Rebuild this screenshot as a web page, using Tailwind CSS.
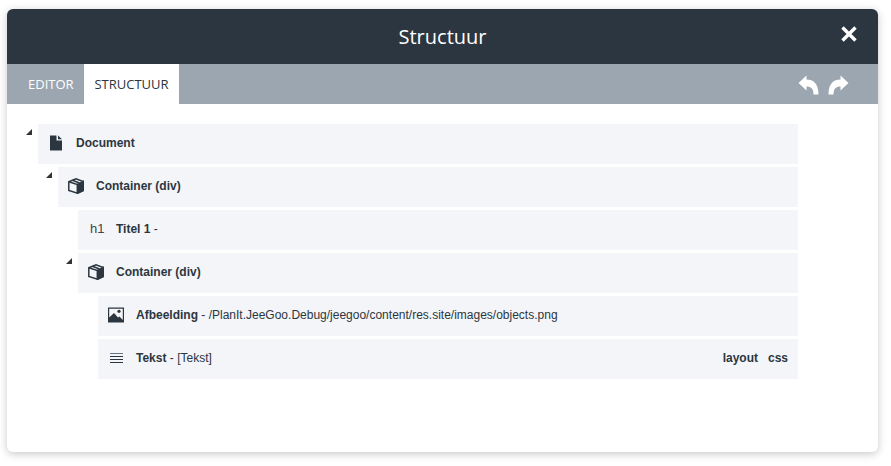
<!DOCTYPE html>
<html lang="en">
<head>
  <meta charset="UTF-8">
  <title>Structuur</title>
  <script src="https://cdn.jsdelivr.net/npm/@tailwindcss/browser@4"></script>
</head>
<body class="bg-white w-[891px] h-[466px] overflow-hidden font-['Liberation_Sans',sans-serif] text-[12px] text-[#2c3640]">
  <div class="mt-[9px] ml-[7px] w-[871px] h-[443px] bg-white rounded-[6px] shadow-[0_2px_8px_rgba(0,0,0,0.22)] overflow-hidden">
    <!-- Header -->
    <div class="relative h-[55px] bg-[#2c3640] flex items-center justify-center text-white font-['Open_Sans',sans-serif] text-[20px]">
      <span>Structuur</span>
      <svg class="absolute left-[834px] top-[17px] w-[16px] h-[16px]" viewBox="0 0 16 16" fill="none" stroke="#fff" stroke-width="3.4"><path d="M1.5 1.500l13 13M14.500 1.500l-13 13"/></svg>
    </div>

    <!-- Toolbar -->
    <div class="h-[40px] bg-[#9ba6b1] flex items-stretch font-['Open_Sans',sans-serif] text-[13px]">
      <div class="w-[77px] pl-[21px] pt-[1px] flex items-center text-white">EDITOR</div>
      <div class="w-[95px] pt-[1px] flex items-center justify-center bg-white text-[#2c3640]">STRUCTUUR</div>
      <div class="ml-auto mr-[29px] flex items-center gap-[9px]">
        <svg class="w-[21px] h-[21px]" viewBox="0 0 21 21" fill="#fff"><path d="M0.500 9L8.500 1.500V5.500C15.500 5.500 20.500 9.500 20.500 20.500H15.500C15.500 14.500 13 12.500 8.500 12.500V16.500Z"/></svg>
        <svg class="w-[21px] h-[21px]" viewBox="0 0 21 21" fill="#fff"><path d="M20.500 9L12.500 1.500V5.500C5.500 5.500 0.500 9.500 0.500 20.500H5.500C5.500 14.500 8 12.500 12.500 12.500V16.500Z"/></svg>
      </div>
    </div>

    <!-- Tree -->
    <div class="pt-[20px] flex flex-col gap-[3px]">
      <div class="relative ml-[31px] w-[760px] h-[40px] bg-[#f3f5f8] flex items-center pl-[10px] pb-[2px] font-bold">
        <svg class="absolute left-[-12px] top-[5px] w-[6px] h-[6px]" viewBox="0 0 6 6" fill="#333"><path d="M6 0V6H0Z"/></svg>
        <svg class="w-[16px] h-[16px] mr-[12px]" viewBox="0 0 16 16" fill="#2c3640"><path d="M2 0.500H8.500V5.500H14V15.500H2ZM10 0.500L14 4.200H10Z"/></svg>
        <span>Document</span>
      </div>

      <div class="relative ml-[51px] w-[740px] h-[40px] bg-[#f3f5f8] flex items-center pl-[10px] pb-[2px] font-bold">
        <svg class="absolute left-[-12px] top-[5px] w-[6px] h-[6px]" viewBox="0 0 6 6" fill="#333"><path d="M6 0V6H0Z"/></svg>
        <svg class="w-[16px] h-[16px] mr-[12px]" viewBox="0 0 16 16" fill="none" stroke="#2c3640" stroke-width="1.500"><path d="M0.800 3.800L8 0.800L15.200 3.500V12.500L9.500 15.200L0.800 12.500Z"/><path d="M0.800 3.800L9.500 6.500V15.200"/><path d="M9.500 6.500L15.200 3.500V12.500L9.500 15.200Z" fill="#2c3640"/><path d="M4.500 2.300L11.500 5"/></svg>
        <span>Container (div)</span>
      </div>

      <div class="ml-[71px] w-[720px] h-[40px] bg-[#f3f5f8] flex items-center pl-[12px] pb-[2px]">
        <span class="w-[26px] text-[13px] text-[#444]">h1</span>
        <span><b>Titel 1</b> -</span>
      </div>

      <div class="relative ml-[71px] w-[720px] h-[40px] bg-[#f3f5f8] flex items-center pl-[10px] pb-[2px] font-bold">
        <svg class="absolute left-[-12px] top-[5px] w-[6px] h-[6px]" viewBox="0 0 6 6" fill="#333"><path d="M6 0V6H0Z"/></svg>
        <svg class="w-[16px] h-[16px] mr-[12px]" viewBox="0 0 16 16" fill="none" stroke="#2c3640" stroke-width="1.500"><path d="M0.800 3.800L8 0.800L15.200 3.500V12.500L9.500 15.200L0.800 12.500Z"/><path d="M0.800 3.800L9.500 6.500V15.200"/><path d="M9.500 6.500L15.200 3.500V12.500L9.500 15.200Z" fill="#2c3640"/><path d="M4.500 2.300L11.500 5"/></svg>
        <span>Container (div)</span>
      </div>

      <div class="ml-[91px] w-[700px] h-[40px] bg-[#f3f5f8] flex items-center pl-[10px] pb-[2px]">
        <svg class="w-[16px] h-[16px] mr-[12px]" viewBox="0 0 16 16"><path fill="#2c3640" fill-rule="evenodd" d="M0 0.500H16V15.500H0ZM1.200 1.700V10.500L6 6L10 10.500L11.500 9.500L14.800 13V1.700Z"/><circle cx="11" cy="4.300" r="1.600" fill="#2c3640"/></svg>
        <span><b>Afbeelding</b> - /PlanIt.JeeGoo.Debug/jeegoo/content/res.site/images/objects.png</span>
      </div>

      <div class="ml-[91px] w-[700px] h-[40px] bg-[#f3f5f8] flex items-center pl-[12px] pr-[10px] pb-[2px]">
        <div class="w-[13px] mr-[13px] flex flex-col gap-[2px]">
          <div class="h-px bg-[#6b737b]"></div>
          <div class="h-px bg-[#2c3640]"></div>
          <div class="h-px bg-[#2c3640]"></div>
          <div class="h-px bg-[#2c3640]"></div>
        </div>
        <span><b>Tekst</b> - [Tekst]</span>
        <div class="ml-auto flex gap-[10px] font-bold">
          <span>layout</span>
          <span>css</span>
        </div>
      </div>
    </div>
  </div>
</body>
</html>
